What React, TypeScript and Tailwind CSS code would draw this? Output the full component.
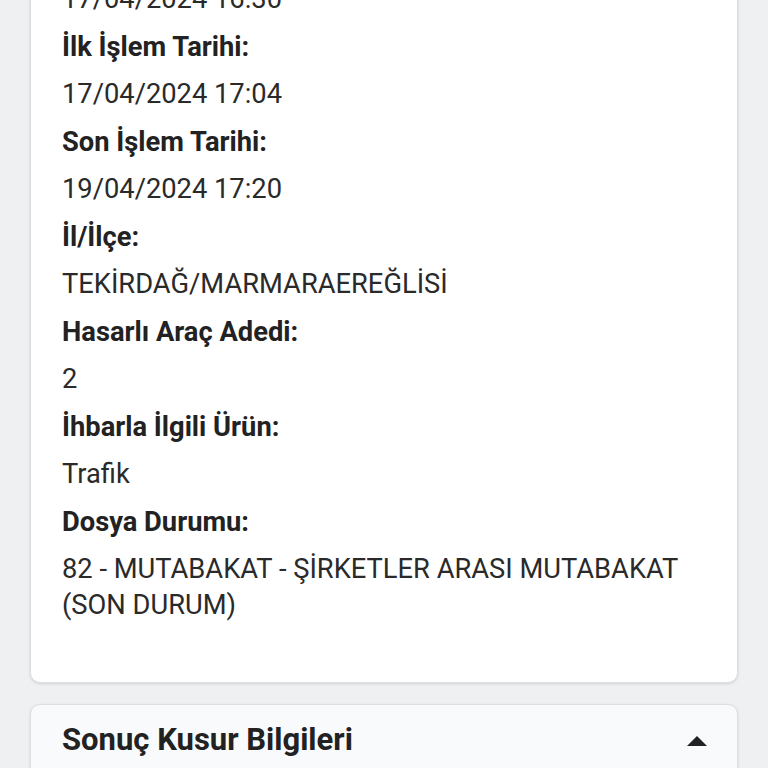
import React from "react";

const items: [string, string][] = [
  ["İlk İşlem Tarihi:", "17/04/2024 17:04"],
  ["Son İşlem Tarihi:", "19/04/2024 17:20"],
  ["İl/İlçe:", "TEKİRDAĞ/MARMARAEREĞLİSİ"],
  ["Hasarlı Araç Adedi:", "2"],
  ["İhbarla İlgili Ürün:", "Trafik"],
  ["Dosya Durumu:", "82 - MUTABAKAT - ŞİRKETLER ARASI MUTABAKAT (SON DURUM)"],
];

export default function App() {
  return (
    <div
      className="w-[768px] h-[768px] overflow-hidden bg-[#eff0f2] px-[30px]"
      style={{ fontFamily: "Roboto, 'Noto Sans', sans-serif" }}
    >
      <div className="-mt-[30px] bg-white rounded-[10px] border border-[#dcdee2] shadow-[0_1px_3px_rgba(0,0,0,0.12)] pl-[31px] pr-[40px] pt-[10px] pb-[47px]">
        <div className="text-[27.3px] leading-[36px] text-[#2a2a2a] mb-[11.5px]">17/04/2024 16:30</div>
        {items.map(([label, value]) => (
          <div key={label}>
            <div className="text-[27.3px] leading-[36px] font-bold text-[#222222] mb-[11.5px]">{label}</div>
            <div className="text-[27.3px] leading-[36px] text-[#2a2a2a] mb-[11.5px]">{value}</div>
          </div>
        ))}
      </div>
      <div className="mt-[21px] bg-[#f9fafc] rounded-[10px] border border-[#dcdee2] shadow-[0_1px_3px_rgba(0,0,0,0.12)] pl-[31px] pr-[30px] h-[120px]">
        <div className="flex items-center justify-between h-[72px]">
          <div className="text-[31px] font-bold text-[#222222]">Sonuç Kusur Bilgileri</div>
          <svg width="20" height="10" viewBox="0 0 20 10">
            <polygon points="10,0 20,10 0,10" fill="#222222" />
          </svg>
        </div>
      </div>
    </div>
  );
}
